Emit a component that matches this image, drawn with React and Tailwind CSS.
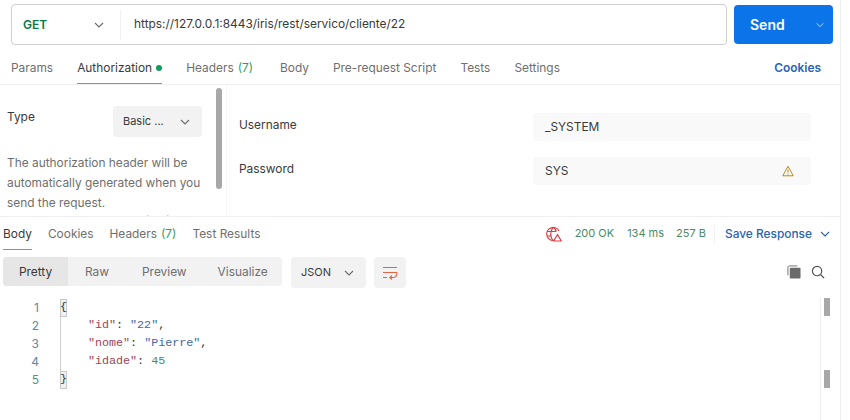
import React from "react";

const Chevron = ({ className = "", color = "#6b6b6b", size = 12 }) => (
  <svg width={size} height={size} viewBox="0 0 12 12" fill="none" stroke={color} strokeWidth="1.1" className={className}>
    <path d="M2 4l4 4 4-4" />
  </svg>
);

const Tab = ({ children, active, className = "" }) => (
  <div className={`relative h-full flex items-center text-[11.9px] ${active ? "text-[#3a3a3a]" : "text-[#6f6f6f]"} ${className}`}>
    {children}
    {active && <div className="absolute left-0 right-0 bottom-0 h-[1px] bg-[#f26b4e]" />}
  </div>
);

const Line = ({ n, children, brace }) => (
  <div className="flex h-[18px] items-center">
    <div className="w-[39px] text-right text-[12px] text-[#5b8aa0] font-['Inter']">{n}</div>
    <div className="w-[21px] h-full" />
    <div className="w-[28px] h-full border-l border-[#cfcfcf] relative">
      {brace && <span className="absolute left-[-1px] top-0 w-[7px] h-[18px] bg-[#f0f0f0] border border-[#c8c8c8] flex items-center justify-center text-[#333]">{brace}</span>}
    </div>
    <div className="whitespace-pre">{children}</div>
  </div>
);

const K = ({ children }) => <span className="text-[#a04455]">{children}</span>;
const S = ({ children }) => <span className="text-[#3f68a8]">{children}</span>;
const P = ({ children }) => <span className="text-[#333]">{children}</span>;

export default function App() {
  return (
    <div className="w-[850px] h-[420px] overflow-hidden bg-white flex font-['Inter',sans-serif]">
      <div className="w-[841px] h-full border-r border-[#efefef] flex flex-col shrink-0">
        {/* URL bar */}
        <div className="h-[48px] shrink-0 flex items-start pt-[4px] pl-[11px] gap-[7px]">
          <div className="w-[716px] h-[41px] border border-[#cfcfcf] rounded-[4px] flex items-center">
            <div className="w-[109px] h-[30px] flex items-center justify-between pl-[11px] pr-[15px] border-r border-[#f0f0f0]">
              <span className="text-[12px] font-semibold text-[#0b7a45]">GET</span>
              <Chevron />
            </div>
            <span className="ml-[13px] text-[11.9px] text-[#3a3a3a] mt-[-1px]">https://127.0.0.1:8443/iris/rest/servico/cliente/22</span>
          </div>
          <div className="w-[99px] h-[39px] mt-[1px] bg-[#0a74e8] rounded-[4px] flex items-center text-white">
            <span className="ml-[16px] text-[14px] font-semibold">Send</span>
            <Chevron size={10} color="#cfe4fb" className="ml-[30px]" />
          </div>
        </div>

        {/* Request tabs */}
        <div className="h-[37px] shrink-0 border-b border-[#f0f0f0] flex items-stretch px-[11px] gap-[24px]">
          <Tab className="pt-[4px]">Params</Tab>
          <Tab active className="pt-[4px]">
            Authorization
            <span className="ml-[4px] w-[6px] h-[6px] rounded-full bg-[#0f9d58]" />
          </Tab>
          <Tab className="pt-[4px] mr-[3px]">Headers<span className="ml-[4px] text-[#2e9e5e]">(7)</span></Tab>
          <Tab className="pt-[4px]">Body</Tab>
          <Tab className="pt-[4px]">Pre-request Script</Tab>
          <Tab className="pt-[4px]">Tests</Tab>
          <Tab className="pt-[4px]">Settings</Tab>
          <span className="ml-auto mr-[8px] pt-[4px] flex items-center text-[11.9px] font-semibold text-[#2a63b5]">Cookies</span>
        </div>

        {/* Auth pane */}
        <div className="h-[132px] shrink-0 border-b border-[#f0f0f0] flex overflow-hidden">
          <div className="relative w-[227px] shrink-0 border-r border-[#f5f5f5] pl-[7px] pt-[21px] overflow-hidden">
            <div className="flex items-start justify-between pr-[24px]">
              <span className="text-[11.9px] text-[#3a3a3a] leading-[20px] mt-[1px]">Type</span>
              <div className="w-[89px] h-[31px] bg-[#f2f2f2] rounded-[4px] flex items-center pl-[10px]">
                <span className="text-[11px] text-[#3a3a3a]">Basic ...</span>
                <Chevron className="ml-[15px]" />
              </div>
            </div>
            <div className="mt-[16px] w-[200px] text-[11.9px] leading-[20px] text-[#6f6f6f]">
              The authorization header will be automatically generated when you send the request.
              <div className="mt-[-2px]">Learn more about authorization</div>
            </div>
            <div className="absolute left-[216px] top-[3px] w-[6px] h-[101px] rounded-full bg-[#a8a8a8]" />
          </div>
          <div className="flex-1 pl-[12px] pr-[29px] pt-[28px] flex flex-col gap-[16px]">
            <div className="flex items-center justify-between h-[28px]">
              <span className="text-[11.9px] text-[#3a3a3a] mt-[-4px]">Username</span>
              <div className="w-[278px] h-[28px] rounded-[4px] bg-[#f9f9f9] flex items-center pl-[12px] text-[11.9px] text-[#3a3a3a]">_SYSTEM</div>
            </div>
            <div className="flex items-center justify-between h-[28px]">
              <span className="text-[11.9px] text-[#3a3a3a] mt-[-4px]">Password</span>
              <div className="w-[278px] h-[28px] rounded-[4px] bg-[#f9f9f9] flex items-center justify-between pl-[12px] pr-[17px] text-[11.9px] text-[#3a3a3a]">
                SYS
                <svg width="12" height="12" viewBox="0 0 12 12" fill="none" stroke="#b98a1f" strokeWidth="1">
                  <path d="M6 1.2L11.2 10.8H.8z" strokeLinejoin="round" />
                  <path d="M6 4.5v3.2M6 8.6v1" />
                </svg>
              </div>
            </div>
          </div>
        </div>

        {/* Response tabs */}
        <div className="h-[33px] shrink-0 flex items-center pl-[3px] pr-[9px]">
          <Tab active className="mr-[16px]">Body</Tab>
          <Tab className="mr-[16px]">Cookies</Tab>
          <Tab className="mr-[16px]">Headers<span className="ml-[4px] text-[#2e9e5e]">(7)</span></Tab>
          <Tab>Test Results</Tab>
          <div className="ml-auto flex items-center h-full text-[11px] text-[#4a8a68]">
            <svg width="16" height="16" viewBox="0 0 16 16" fill="none" stroke="#e0393e" strokeWidth="1.2" className="mr-[13px]">
              <path d="M13 5A6.5 6.5 0 1 0 7.5 14.5" />
              <path d="M1.2 5.5h9M1.2 10h4.5M7.5 1.2C5 4 4.5 8 5 10.5c.3 1.600 1.200 3 2.500 4M7.500 1.200c1.500 1.300 2.300 2.800 2.700 4.300" />
              <path d="M11.500 8.500l3.800 6.500H7.700z" strokeLinejoin="round" />
            </svg>
            <span>200 OK</span>
            <span className="ml-[13px]">134 ms</span>
            <span className="ml-[12px]">257 B</span>
            <span className="ml-[8px] mr-[10px] w-[1px] h-[18px] bg-[#f5f0f0]" />
            <span className="text-[11.9px] font-medium text-[#2a63b5]">Save Response</span>
            <Chevron color="#2a63b5" className="ml-[7px]" />
          </div>
        </div>

        {/* Toolbar */}
        <div className="h-[40px] shrink-0 flex items-start pt-[7px] pl-[3px] pr-[15px]">
          <div className="w-[279px] h-[29px] bg-[#f2f2f2] rounded-[4px] flex items-center overflow-hidden text-[11.9px] text-[#6f6f6f]">
            <div className="w-[65px] h-full bg-[#e6e6e6] flex items-center justify-center text-[#3a3a3a]">Pretty</div>
            <span className="ml-[17px]">Raw</span>
            <span className="ml-[33px]">Preview</span>
            <span className="ml-[31px]">Visualize</span>
          </div>
          <div className="ml-[9px] w-[75px] h-[31px] bg-[#f2f2f2] rounded-[4px] flex items-center pl-[10px] text-[11px] text-[#3a3a3a]">
            JSON
            <Chevron className="ml-[12px]" />
          </div>
          <div className="ml-[8px] w-[32px] h-[31px] bg-[#f2f2f2] rounded-[4px] flex items-center justify-center">
            <svg width="16" height="14" viewBox="0 0 16 14" fill="none" stroke="#e0654a" strokeWidth="1.100">
              <path d="M1 1.500h14M1 6.500h14M1 11.500h4" />
              <path d="M15 6.500c0 0 0 5-3 5H8M10 9.500l-2.200 2 2.200 2" />
            </svg>
          </div>
          <div className="ml-auto flex items-center gap-[10px] h-[29px]">
            <svg width="14" height="14" viewBox="0 0 15 15">
              <path d="M1 11V2.500A1.500 1.500 0 0 1 2.500 1H11" fill="none" stroke="#6b6b6b" strokeWidth="1" />
              <rect x="3" y="3" width="11.500" height="11.500" rx="1" fill="#6b6b6b" />
            </svg>
            <svg width="14" height="14" viewBox="0 0 15 15" fill="none" stroke="#555" strokeWidth="1.300">
              <circle cx="6.500" cy="6.500" r="5" />
              <path d="M10.200 10.200L14 14" />
            </svg>
          </div>
        </div>

        {/* Code */}
        <div className="relative flex-1 pt-[9px] text-[11.7px] font-['Liberation_Mono',monospace] text-[#333]">
          <Line n="1" brace="{" />
          <Line n="2"><K>"id"</K><P>: </P><S>"22"</S><P>,</P></Line>
          <Line n="3"><K>"nome"</K><P>: </P><S>"Pierre"</S><P>,</P></Line>
          <Line n="4"><K>"idade"</K><P>: </P><span className="text-[#4a8a68]">45</span></Line>
          <Line n="5" brace="}" />
          <div className="absolute left-[820px] top-[8px] bottom-0 w-[10px] border-l border-[#efefef]">
            <div className="absolute left-[3px] top-0 w-[6px] h-[18px] bg-[#a8a8a8]" />
            <div className="absolute left-[3px] top-[72px] w-[6px] h-[18px] bg-[#a8a8a8]" />
          </div>
        </div>
      </div>
      <div className="flex-1 h-full bg-white" />
    </div>
  );
}
